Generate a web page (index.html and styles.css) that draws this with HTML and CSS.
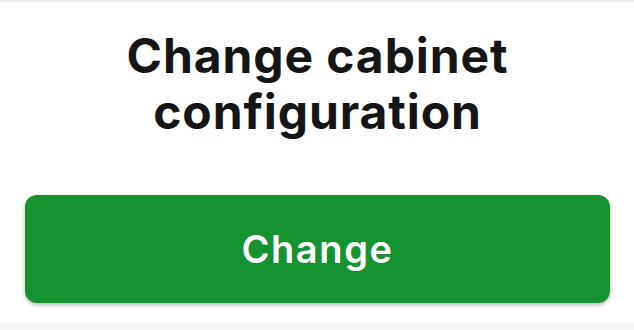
FILE: index.html
```html
<!DOCTYPE html>
<html>
<head>
<meta charset="utf-8">
<link rel="stylesheet" href="styles.css">
</head>
<body>
<div class="screen">
  <div class="top-edge"></div>
  <main class="content">
    <h1 class="title">Change cabinet configuration</h1>
    <button class="primary-btn">Change</button>
  </main>
  <div class="bottom-edge"></div>
</div>
</body>
</html>
```
FILE: styles.css
```css
html, body {
  margin: 0;
  padding: 0;
  background: #ffffff;
}
.screen {
  width: 634px;
  height: 330px;
  display: flex;
  flex-direction: column;
  overflow: hidden;
  font-family: Inter, Roboto, "Liberation Sans", sans-serif;
}
.top-edge {
  height: 2px;
  background: #efefef;
  flex: none;
}
.content {
  flex: 1;
  display: flex;
  flex-direction: column;
  align-items: stretch;
  padding: 26px 24px 0 25px;
}
.title {
  margin: 0 auto;
  width: 460px;
  text-align: center;
  font-size: 48px;
  line-height: 56px;
  letter-spacing: 0.9px;
  font-weight: 700;
  color: #161616;
}
.primary-btn {
  margin-top: 55px;
  height: 108px;
  border: none;
  border-radius: 12px;
  background: #14932e;
  color: #ffffff;
  font-family: Inter, Roboto, "Liberation Sans", sans-serif;
  font-size: 38px;
  letter-spacing: 1.6px;
  font-weight: 600;
  box-shadow: 0 2px 4px rgba(0, 0, 0, 0.28);
  padding: 0;
}
.bottom-edge {
  height: 7px;
  background: #f6f6f6;
  flex: none;
}
```
